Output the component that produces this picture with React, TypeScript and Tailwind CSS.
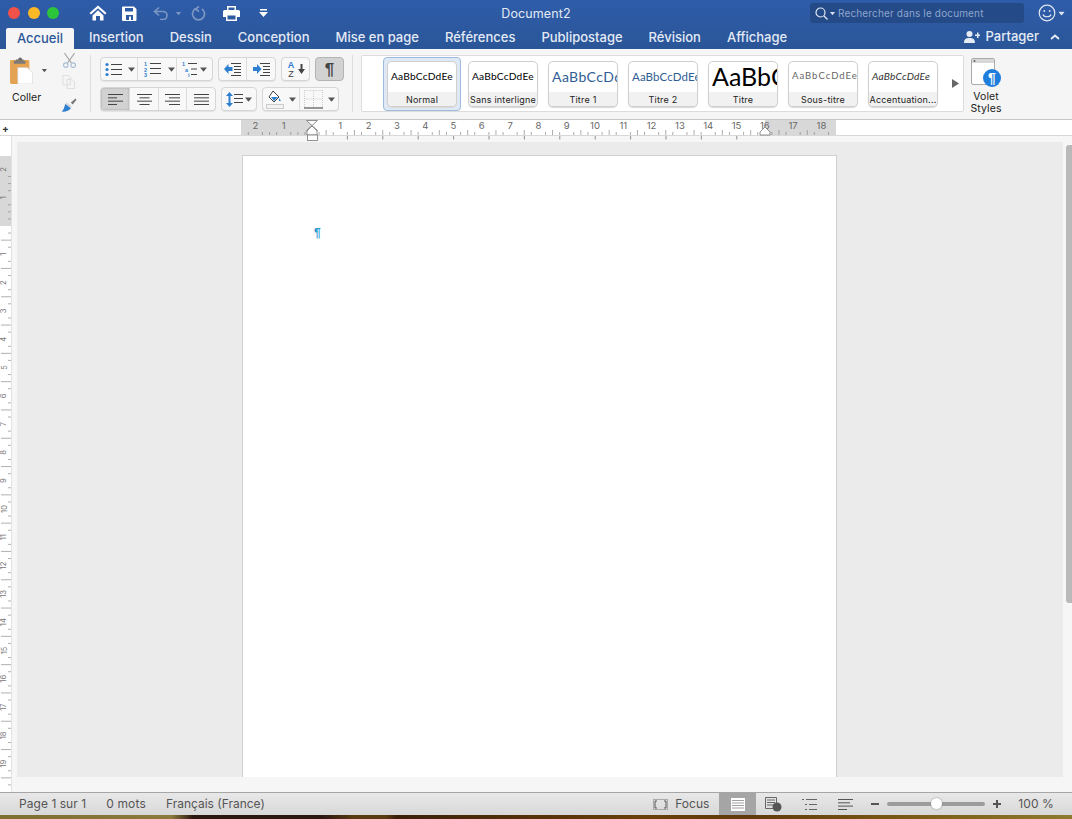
import React from "react";

const UI = "font-['Inter','Liberation_Sans',sans-serif]";

const Caret = ({ c = "#555", className = "" }: { c?: string; className?: string }) => (
  <svg width="7" height="5" viewBox="0 0 7 5" className={className}><path d="M0 0.5h7L3.500 4.800z" fill={c} /></svg>
);

const Lines = ({ x, y, w, n = 3, gap = 4, c = "#444" }: { x: number; y: number; w: number; n?: number; gap?: number; c?: string }) => (
  <g stroke={c} strokeWidth="1">
    {Array.from({ length: n }).map((_, i) => (
      <path key={i} d={`M${x} ${y + i * gap + 0.5}h${w}`} />
    ))}
  </g>
);

const Blue = "#2e7fd0";

const Btn = ({ w, pressed, border = true, children }: { w: number; pressed?: boolean; border?: boolean; children?: React.ReactNode }) => (
  <div style={{ width: w }} className={`flex items-center justify-center h-full ${border ? "border-r border-[#dcdcdc] last:border-r-0" : ""} ${pressed ? "bg-[#d2d2d2] shadow-[inset_0_0_2px_#999]" : ""}`}>
    {children}
  </div>
);

const Group = ({ children, className = "" }: { children: React.ReactNode; className?: string }) => (
  <div className={`flex h-[24px] rounded-[4px] border border-[#d6d6d6] bg-[#f8f8f8] overflow-hidden shadow-[0_1px_0_#e4e4e4] ${className}`}>{children}</div>
);

const Bullets = () => (
  <svg width="17" height="15" viewBox="0 0 17 15">
    <circle cx="2" cy="2.500" r="1.600" fill={Blue} /><circle cx="2" cy="7.500" r="1.600" fill={Blue} /><circle cx="2" cy="12.500" r="1.600" fill={Blue} />
    <Lines x={6} y={2} w={11} gap={5} />
  </svg>
);
const Numbered = () => (
  <svg width="17" height="16" viewBox="0 0 17 16">
    <text x="0" y="5" fontSize="5.500" fill={Blue} fontWeight="700" fontFamily="Liberation Sans">1</text>
    <text x="0" y="10.500" fontSize="5.500" fill={Blue} fontWeight="700" fontFamily="Liberation Sans">2</text>
    <text x="0" y="16" fontSize="5.500" fill={Blue} fontWeight="700" fontFamily="Liberation Sans">3</text>
    <Lines x={6} y={2} w={11} gap={5} />
  </svg>
);
const Multi = () => (
  <svg width="16" height="16" viewBox="0 0 16 16">
    <text x="0" y="5" fontSize="5.500" fill={Blue} fontWeight="700" fontFamily="Liberation Sans">1</text>
    <text x="3" y="10.500" fontSize="5.500" fill={Blue} fontWeight="700" fontFamily="Liberation Sans">a</text>
    <text x="6" y="16" fontSize="5.500" fill={Blue} fontWeight="700" fontFamily="Liberation Sans">i</text>
    <path d="M6 2.500h9M9 8h6M9 13.500h6" stroke="#444" />
  </svg>
);
const Indent = ({ right }: { right?: boolean }) => (
  <svg width="17" height="13" viewBox="0 0 17 13">
    {right ? <path d="M0 4h4V1l4.500 5L4 11V8H0z" fill={Blue} /> : <path d="M8.500 4h-4V1L0 6l4.500 5V8h4z" fill={Blue} />}
    <path d="M7 .5h10M10 3.500h7M10 6.500h7M10 9.500h7M7 12.500h10" stroke="#444" />
  </svg>
);
const Align = ({ w, mode }: { w: number[]; mode: "l" | "c" | "r" }) => (
  <svg width="15" height="11" viewBox="0 0 15 11" stroke="#444">
    {w.map((v, i) => {
      const x = mode === "c" ? (15 - v) / 2 : mode === "r" ? 15 - v : 0;
      return <path key={i} d={`M${x} ${i * 3.33 + 0.5}h${v}`} />;
    })}
  </svg>
);

const Style = ({ label, children, selected }: { label: string; children: React.ReactNode; selected?: boolean }) => (
  <div className={selected ? "w-[78px] h-[54px] -ml-[5px] -mr-[3px] p-[3px] rounded-[4px] bg-[#dfe9f5] border border-[#9dbbdc] shrink-0" : "w-[70px] shrink-0"}>
    <div className="w-[70px] h-[46px] rounded-[5px] border border-[#d0d0d0] bg-white overflow-hidden flex flex-col shadow-[0_1px_1px_#d8d8d8]">
      <div className="h-[30px] flex items-center justify-start overflow-hidden pl-[3px] whitespace-nowrap shrink-0">{children}</div>
      <div className={`flex-1 bg-[#f1f1f1] text-center text-[9px] leading-[15px] text-[#222] whitespace-nowrap tracking-[0.2px] ${UI}`}>{label}</div>
    </div>
  </div>
);

const SAMPLE = "font-['Lato','Liberation_Sans',sans-serif]";

const HRuler = () => {
  const zero = 71;
  const cm = 28.3;
  const ticks: React.ReactNode[] = [];
  for (let i = -10; i <= 74; i++) {
    const x = zero + (i * cm) / 4;
    if (x < 1 || x > 594 || i % 4 === 0) continue;
    const h = i % 4 === 2 ? 5 : 3;
    ticks.push(<path key={i} d={`M${x} ${15 - h}v${h}`} stroke="#8a8a8a" strokeWidth=".7" />);
  }
  const nums = [-2, -1, 1, 2, 3, 4, 5, 6, 7, 8, 9, 10, 11, 12, 13, 14, 15, 16, 17, 18];
  const tabs = Array.from({ length: 12 }, (_, i) => zero + (i + 1) * 35.4);
  return (
    <svg width="595" height="16" viewBox="0 0 595 16" className="overflow-visible shrink-0">
      <rect x="0" y="0" width={zero} height="16" fill="#d8d8d8" />
      <rect x="524" y="0" width="71" height="16" fill="#d8d8d8" />
      {ticks}
      {tabs.map((x) => <path key={x} d={`M${x} 16v3.500`} stroke="#777" strokeWidth=".8" />)}
      {nums.map((n) => (
        <text key={n} x={zero + n * cm} y="9" fontSize="9.500" textAnchor="middle" fill="#666" fontFamily="Inter">{Math.abs(n)}</text>
      ))}
      <path d="M65.500 .5l11 0-11 10h11z" fill="#fff" stroke="#777" strokeWidth=".8" />
      <path d="M66 11 71 6l5 5v4H66z" fill="#fff" stroke="#777" strokeWidth=".8" />
      <rect x="66.500" y="15" width="10" height="5.500" fill="#fff" stroke="#777" strokeWidth=".8" />
      <path d="M519 15v-3l5-5 5 5v3z" fill="#fff" stroke="#777" strokeWidth=".8" />
    </svg>
  );
};

const VRuler = () => {
  const top = 20;
  const zero = 90;
  const cm = 28.3;
  const ticks: React.ReactNode[] = [];
  for (let i = -8; i <= 80; i++) {
    const y = zero + (i * cm) / 4;
    if (i % 4 === 0 || y > 656) continue;
    const long = i % 4 === 2;
    ticks.push(<path key={i} d={long ? `M1 ${y}h10` : `M8 ${y}h3`} stroke="#8f8f8f" strokeWidth=".7" />);
  }
  const nums = [-2, -1, ...Array.from({ length: 19 }, (_, i) => i + 1)];
  return (
    <svg width="11" height="656" viewBox="0 0 11 656" className="shrink-0">
      <rect width="11" height={zero - top} y={top} fill="#d8d8d8" />
      {ticks}
      {nums.map((n) => {
        const y = zero + n * cm;
        return (
          <text key={n} x="3.500" y={y + 3} fontSize="7.500" textAnchor="middle" fill="#777" fontFamily="Inter" transform={`rotate(-90 3.500 ${y})`}>{Math.abs(n)}</text>
        );
      })}
    </svg>
  );
};

export default function App() {
  const tabs = ["Insertion", "Dessin", "Conception", "Mise en page", "Références", "Publipostage", "Révision", "Affichage"];
  return (
    <div className={`w-[1072px] h-[819px] overflow-hidden flex flex-col bg-[#f5f5f5] ${UI}`}>
      {/* Title bar */}
      <div className="h-[49px] shrink-0 bg-gradient-to-b from-[#2f5ca9] to-[#2a5698] flex flex-col">
        <div className="h-[26px] flex items-center relative shrink-0">
          <div className="flex items-center gap-[7.500px] ml-[8px] w-[70px] -mt-[1px]">
            <span className="w-[12px] h-[12px] rounded-full bg-[#f0524a]" />
            <span className="w-[12px] h-[12px] rounded-full bg-[#fdb826]" />
            <span className="w-[12px] h-[12px] rounded-full bg-[#2bc53c]" />
          </div>
          <svg width="18" height="16" viewBox="0 0 18 16" className="ml-[11px]"><path d="M9 .5 0.500 8 2 9.500 9 3.300l7 6.200 1.500-1.500zM3.500 10.500V15.500h3.500v-4.500h4v4.500h3.500v-5L9 5.300z" fill="#fff" /></svg>
          <svg width="15" height="15" viewBox="0 0 15 15" className="ml-[15px]"><path fillRule="evenodd" d="M1 .5h11l2.500 2.500v11a1 1 0 0 1-1 1h-12.500a1 1 0 0 1-1-1V1.500a1 1 0 0 1 1-1zM3 2v3.500h8V2zM4 9v5h7V9z" fill="#fff" /><rect x="7" y="10.500" width="2" height="3.500" fill="#fff" /></svg>
          <svg width="16" height="14" viewBox="0 0 16 14" fill="none" stroke="#7d97c4" strokeWidth="1.600" className="ml-[16px]"><path d="M6 1.500 1.500 5.500 6 9.500M2 5.500h8a4 4 0 0 1 0 8H7" /></svg>
          <Caret c="#7d97c4" className="ml-[6px] scale-75" />
          <svg width="15" height="15" viewBox="0 0 15 15" fill="none" stroke="#7d97c4" strokeWidth="1.700" className="ml-[9px]"><path d="M4 3a6 6 0 1 0 7 0M8 0.500 4.500 3 8 5.500" /></svg>
          <svg width="17" height="15" viewBox="0 0 17 15" className="ml-[17px]"><path fillRule="evenodd" d="M4 0h9v4h2.500A1.500 1.500 0 0 1 17 5.500V11h-3v4H3v-4H0V5.500A1.500 1.500 0 0 1 1.500 4H4zM5.500 1.500V4h6V1.500zM4.500 9.500v4h8v-4z" fill="#fff" /></svg>
          <svg width="9" height="8" viewBox="0 0 9 8" className="ml-[19px]"><path d="M1 0h7v1.500H1zM0 3h9L4.500 8z" fill="#fff" /></svg>
          <div className="absolute left-[436px] top-[5px] w-[200px] text-center text-[12.500px] text-[#e3eaf5] tracking-[0.1px]">Document2</div>
          <div className="ml-auto w-[214px] h-[20px] rounded-[3px] bg-[#244a88] flex items-center pl-[5px] mr-[14px]">
            <svg width="13" height="13" viewBox="0 0 13 13" fill="none" stroke="#e3eaf5" strokeWidth="1.200"><circle cx="5.500" cy="5.500" r="4.500" /><path d="M9 9l3.500 3.500" /></svg>
            <Caret c="#d5def0" className="ml-[1px] scale-75" />
            <span className="ml-[2px] text-[10px] text-[#8ea6ce] tracking-[0.15px] whitespace-nowrap">Rechercher dans le document</span>
          </div>
          <svg width="18" height="18" viewBox="0 0 18 18" fill="none" stroke="#dfe7f4" strokeWidth="1.200"><circle cx="9" cy="9" r="7.800" /><circle cx="6.300" cy="7" r=".9" fill="#dfe7f4" stroke="none" /><circle cx="11.700" cy="7" r=".9" fill="#dfe7f4" stroke="none" /><path d="M5 10.500c1 3 7 3 8 0" /></svg>
          <Caret c="#dfe7f4" className="ml-[2px] mr-[7px] scale-90" />
        </div>
        <div className="flex-1 flex items-end pl-[6px] pr-[10px]">
          <div className="w-[68px] h-[22px] bg-[#f5f5f5] rounded-t-[2px] text-center text-[13px] leading-[21px] font-medium text-[#2b579a]">Accueil</div>
          <div className="flex items-center gap-[26px] ml-[15px] h-[24px] pb-[1px]">
            {tabs.map((t) => (
              <span key={t} className="text-[13px] font-medium text-[#e4eaf5] whitespace-nowrap">{t}</span>
            ))}
          </div>
          <div className="ml-auto flex items-center h-[24px] pb-[2px]">
            <svg width="16" height="12" viewBox="0 0 16 12" fill="#e6ecf6"><circle cx="5.500" cy="3" r="3" /><path d="M0 12c0-4 2-5 5.500-5s5.500 1 5.500 5zM11 3.500h2V1.500h1.500v2h1.500V5h-1.500v2H13V5h-2z" /></svg>
            <span className="ml-[5px] text-[13px] font-medium text-[#e6ecf6]">Partager</span>
            <svg width="10" height="6" viewBox="0 0 10 6" fill="none" stroke="#e6ecf6" strokeWidth="1.800" className="ml-[11px] mr-[2px]"><path d="M1 5l4-3.500L9 5" /></svg>
          </div>
        </div>
      </div>

      {/* Ribbon */}
      <div className="h-[71px] shrink-0 border-b border-[#c6c6c6] bg-[#f5f5f5] flex items-start pt-[6px] relative">
        <div className="w-[91px] h-[57px] border-r border-[#dedede] flex shrink-0">
          <div className="w-[48px] pl-[10px] shrink-0 flex flex-col pt-[2px]">
            <div className="flex items-center">
              <svg width="24" height="27" viewBox="0 0 24 28">
                <rect x="0" y="3" width="20" height="25" rx="1.500" fill="#e4a352" />
                <path d="M6 4V2.500h2.500a2 2 0 0 1 4 0H14V4z" fill="#6a6a6a" />
                <rect x="4" y="4" width="12" height="3" fill="#7b7b7b" />
                <path d="M8 11h10l5.500 5.500V28H8z" fill="#fff" stroke="#ccc" strokeWidth=".6" />
              </svg>
              <Caret c="#555" className="ml-[8px] scale-75" />
            </div>
            <span className="text-[10.500px] text-[#222] mt-[7px] ml-[2px] leading-[13px]">Coller</span>
          </div>
          <div className="flex flex-col items-center ml-[13px] w-[16px] -mt-[2px]">
            <svg width="15" height="16" viewBox="0 0 15 16" fill="none" stroke="#a9c0d8" strokeWidth="1.200"><path d="M2 0l7.500 10.500M13 0 5.500 10.500" stroke="#a6a6a6" /><circle cx="3.500" cy="13" r="2.400" /><circle cx="11.500" cy="13" r="2.400" /></svg>
            <svg width="14" height="15" viewBox="0 0 14 15" fill="none" stroke="#dcdcdc" className="mt-[7px]"><path d="M.5.500h6l2 2v8h-8zM5 4.500h5l3 3v7H5z" fill="#f5f5f5" /></svg>
            <svg width="16" height="16" viewBox="0 0 16 16" className="mt-[8px]"><path d="M10 6 15 1.500 16 3l-4 5z" fill="#777" /><path d="M5 5.500l6 4-1.500 2.500L4 8z" fill="#d8d8d8" /><path d="M4 7.500l6 4.500c-2 3-6 4-10 3.500 2-1 3-4 4-8z" fill="#2e7fd0" /></svg>
          </div>
        </div>

        <div className="w-[262px] h-[57px] border-r border-[#dedede] shrink-0 pl-[9px] flex flex-col gap-[6px] pt-[2px]">
          <div className="flex gap-[5px]">
            <Group>
              <Btn w={25} border={false}><Bullets /></Btn>
              <Btn w={12}><Caret /></Btn>
              <Btn w={29} border={false}><Numbered /></Btn>
              <Btn w={10}><Caret /></Btn>
              <Btn w={35}><div className="flex items-center gap-[2px]"><Multi /><Caret /></div></Btn>
            </Group>
            <Group>
              <Btn w={28}><Indent /></Btn>
              <Btn w={28}><Indent right /></Btn>
            </Group>
            <Group>
              <Btn w={27}>
                <div className="flex items-center gap-[2px]">
                  <svg width="10" height="18" viewBox="0 0 10 18"><text x="5" y="8" fontSize="9" textAnchor="middle" fontWeight="700" fill={Blue} fontFamily="Liberation Sans">A</text><text x="5" y="17" fontSize="9" textAnchor="middle" fill="#444" fontFamily="Liberation Sans">Z</text></svg>
                  <svg width="7" height="10" viewBox="0 0 7 10"><path d="M2.500 0h2v5H7L3.500 10 0 5h2.500z" fill="#444" /></svg>
                </div>
              </Btn>
            </Group>
            <div className="w-[29px] h-[24px] rounded-[4px] border border-[#b4b4b4] bg-[#d2d2d2] flex items-center justify-center text-[17px] leading-none text-[#444] font-['Liberation_Sans'] font-bold">¶</div>
          </div>
          <div className="flex gap-[5px]">
            <Group>
              <Btn w={29} pressed><Align mode="l" w={[15, 9, 15, 9]} /></Btn>
              <Btn w={29}><Align mode="c" w={[15, 10, 15, 10]} /></Btn>
              <Btn w={28}><Align mode="r" w={[15, 11, 15, 11]} /></Btn>
              <Btn w={28}><Align mode="l" w={[15, 15, 15, 15]} /></Btn>
            </Group>
            <Group>
              <Btn w={34}>
                <div className="flex items-center gap-[2px]">
                  <svg width="17" height="15" viewBox="0 0 17 15"><path d="M3.500 0 7 4H0zM3.500 15 7 11H0z" fill={Blue} /><rect x="2.500" y="3" width="2" height="9" fill={Blue} /><path d="M8 2.500h9M8 6.500h9M8 10.500h9" stroke="#444" /></svg>
                  <Caret />
                </div>
              </Btn>
            </Group>
            <Group>
              <Btn w={37}>
                <div className="flex items-center gap-[5px]">
                  <svg width="18" height="19" viewBox="0 0 18 19"><path d="M7 1 13 7l-5 5-5-5z" fill="#fff" stroke="#444" /><path d="M13 8l2 3h-2z" fill={Blue} /><path d="M5 7h7l-4 4z" fill={Blue} /><rect x=".5" y="14.500" width="17" height="4" fill="#f2f2f2" stroke="#ccc" /></svg>
                  <Caret />
                </div>
              </Btn>
              <Btn w={38}>
                <div className="flex items-center gap-[5px]">
                  <svg width="19" height="19" viewBox="0 0 19 19" fill="none"><path d="M.5 0v17M18.500 0v17M.5.500h18M.5 9h18M9.500 0v17" stroke="#ccc" strokeDasharray="1 1" /><path d="M0 18h19" stroke="#333" /></svg>
                  <Caret />
                </div>
              </Btn>
            </Group>
          </div>
        </div>

        <div className="ml-[8px] w-[603px] h-[57px] bg-white border border-[#dcdcdc] rounded-[2px] shrink-0 flex items-center pl-[26px] gap-[10px]">
          <Style label="Normal" selected><span className={`${SAMPLE} text-[10.200px] text-black tracking-[0.2px]`}>AaBbCcDdEe</span></Style>
          <Style label="Sans interligne"><span className={`${SAMPLE} text-[10.200px] text-black tracking-[0.2px]`}>AaBbCcDdEe</span></Style>
          <Style label="Titre 1"><span className={`${SAMPLE} text-[14px] text-[#2f5e94] tracking-[0.4px]`}>AaBbCcDdEe</span></Style>
          <Style label="Titre 2"><span className={`${SAMPLE} text-[11.500px] text-[#2f5e94] tracking-[0.1px]`}>AaBbCcDdEe</span></Style>
          <Style label="Titre"><span className={`${SAMPLE} text-[25px] text-black`}>AaBbCc</span></Style>
          <Style label="Sous-titre"><span className={`${SAMPLE} text-[9.500px] text-[#666] tracking-[1px]`}>AaBbCcDdEe</span></Style>
          <Style label="Accentuation..."><span className={`${SAMPLE} text-[10.200px] italic text-[#333] tracking-[0.2px]`}>AaBbCcDdEe</span></Style>
          <svg width="7" height="9" viewBox="0 0 7 9" className="ml-[4px]"><path d="M0 0l7 4.500L0 9z" fill="#666" /></svg>
        </div>

        <div className="w-[50px] ml-[-3px] shrink-0 flex flex-col items-center pt-[3px]">
          <svg width="30" height="30" viewBox="0 0 30 30">
            <rect x=".5" y=".5" width="23" height="26" rx="1.500" fill="#fff" stroke="#aaa" />
            <rect x="1" y="1" width="22" height="4" fill="#d8d8d8" />
            <circle cx="3.500" cy="3" r="1" fill="#666" />
            <circle cx="21" cy="20" r="9" fill="#1f7ddc" />
            <text x="21" y="25" textAnchor="middle" fontSize="14" fontWeight="700" fill="#fff" fontFamily="Liberation Sans">¶</text>
          </svg>
          <div className="text-[10.500px] leading-[12px] text-[#222] text-center tracking-[0.1px] mt-[3px]">Volet<br />Styles</div>
        </div>
      </div>

      {/* Horizontal ruler */}
      <div className="h-[16px] shrink-0 flex bg-white border-b border-[#d8d8d8] relative z-10">
        <div className="w-[11px] flex items-center justify-center text-[#333] text-[10px] leading-none font-bold">+</div>
        <div className="ml-[230px]"><HRuler /></div>
      </div>

      {/* Document area */}
      <div className="flex-1 min-h-0 flex bg-[#f6f6f6] overflow-hidden">
        <div className="w-[11px] bg-white border-r border-[#e2e2e2] shrink-0 box-content"><VRuler /></div>
        <div className="w-[1046px] ml-[5px] mt-[6px] mb-[15px] bg-[#ebebeb] pt-[13px] pl-[225px] shrink-0 overflow-hidden">
          <div className="w-[595px] h-full bg-white border border-b-0 border-[#d0d0d0] pl-[71px] pt-[67px]">
            <span className="block text-[12px] leading-[20px] text-[#2a9bd1] font-['Liberation_Sans'] font-bold">¶</span>
          </div>
        </div>
        <div className="ml-[3px] mt-[9px] w-[6px] h-[458px] rounded-l-[3px] bg-[#b9b9b9] shrink-0" />
      </div>

      {/* Status bar */}
      <div className="h-[23px] shrink-0 border-t border-[#a6a6a6] bg-gradient-to-b from-[#e8e8e8] to-[#d8d8d8] flex items-center text-[12px] text-[#555]">
        <span className="ml-[19px] tracking-[0.05px]">Page 1 sur 1</span>
        <span className="ml-[20px] tracking-[0.15px]">0 mots</span>
        <span className="ml-[20px]">Français (France)</span>
        <svg width="15" height="11" viewBox="0 0 15 11" fill="none" stroke="#555" className="ml-auto"><rect x=".5" y=".5" width="14" height="10" stroke="#aaa" /><path d="M4 2H2v7h2M11 2h2v7h-2" /></svg>
        <span className="ml-[7px]">Focus</span>
        <div className="ml-[10px] w-[37px] h-full bg-[#a5a5a5] flex items-center justify-center">
          <svg width="14" height="13" viewBox="0 0 14 13"><rect width="14" height="13" fill="#fff" /><path d="M1 2.500h12M1 5h12M1 7.500h12M1 10h12" stroke="#888" strokeWidth=".8" /></svg>
        </div>
        <svg width="17" height="15" viewBox="0 0 17 15" className="ml-[9px]"><path d="M.5.500h11v11H.5zM2 3h8M2 5.500h8M2 8h8" fill="none" stroke="#666" /><circle cx="12" cy="10" r="4.500" fill="#555" /></svg>
        <svg width="15" height="11" viewBox="0 0 15 11" className="ml-[20px]" stroke="#666"><path d="M0 .5h2M4 .5h11M3 5.500h2M7 5.500h8M3 10.500h2M7 10.500h8" /></svg>
        <svg width="15" height="11" viewBox="0 0 15 11" className="ml-[21px]" stroke="#555"><path d="M0 .5h15M0 3.800h12M0 7.100h15M0 10.500h9" /></svg>
        <svg width="8" height="2" viewBox="0 0 8 2" className="ml-[18px]"><rect width="8" height="2" fill="#555" /></svg>
        <div className="ml-[8px] w-[98px] h-[4px] rounded-full bg-[#9c9c9c] relative">
          <span className="absolute left-[44px] top-[-4px] w-[11px] h-[11px] rounded-full bg-white shadow-[0_0_2px_#888]" />
        </div>
        <svg width="8" height="8" viewBox="0 0 8 8" className="ml-[8px]"><path d="M3 0h2v3h3v2H5v3H3V5H0V3h3z" fill="#555" /></svg>
        <span className="ml-[17px] mr-[18px] tracking-[0.1px]">100 %</span>
      </div>

      {/* Desktop wallpaper */}
      <div className="h-[4px] shrink-0 bg-[linear-gradient(90deg,#7d6f30_0%,#8a7a3c_16%,#2a1710_18%,#2a1710_30%,#5a3a10_33%,#5a3a10_36%,#3a1f08_37%,#6a3f0a_60%,#5f3a0c_70%,#7a5a16_85%,#8f7a30_100%)]" />
    </div>
  );
}
